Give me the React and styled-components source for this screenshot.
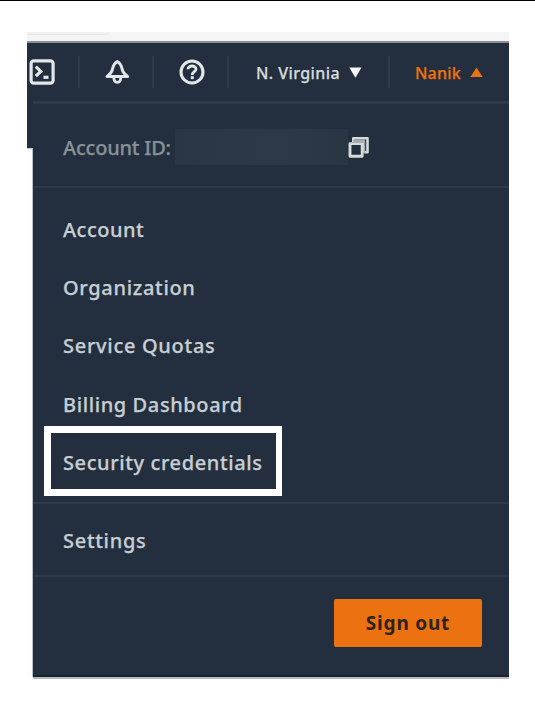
import React from "react";
import styled, { createGlobalStyle } from "styled-components";

const GlobalStyle = createGlobalStyle`
  * { box-sizing: border-box; }
  body { margin: 0; background: #fff; font-family: "Noto Sans", "Open Sans", sans-serif; }
`;

const Page = styled.div`
  width: 535px;
  height: 706px;
  border-top: 1px solid #000;
  padding: 31px 26px 0 27px;
  overflow: hidden;
`;

const Strip = styled.div`
  height: 11px;
  background: #f5f5f5;
  border-bottom: 2px solid #8b9198;
`;

const StripTab = styled.div`
  width: 82px;
  height: 3px;
  background: #f1f1f1;
  border-bottom: 1px solid #e6e6e6;
  border-bottom-right-radius: 3px;
`;

const Shell = styled.div`
  display: grid;
  grid-template-columns: 6px 1fr;
`;

const Gutter = styled.div`
  background: linear-gradient(#232f3e 47px, #b8bcc0 47px, #fdfdfd 49px);
`;

const GutterShade = styled.div`
  height: 529px;
  margin: 47px 0 0 5px;
  background: #b9c0c6;
`;

const Header = styled.header`
  height: 58px;
  background: #232f3e;
  display: flex;
  align-items: center;
`;

const Cell = styled.div`
  width: ${(p) => p.$w}px;
  height: 32px;
  display: flex;
  align-items: center;
  padding-left: ${(p) => p.$pad}px;
  border-right: ${(p) => (p.$last ? "0" : "2px solid #2e3948")};
  color: ${(p) => (p.$active ? "#ec7211" : "#d5dbdb")};
  svg { display: block; flex: none; }
`;

const NavText = styled.span`
  font-size: 16px;
  line-height: 22px;
  font-weight: 500;
  -webkit-text-stroke: 0.25px currentColor;
  letter-spacing: ${(p) => p.$ls}px;
  width: ${(p) => p.$w}px;
  white-space: nowrap;
  margin-top: 2px;
`;

const Menu = styled.div`
  background: #232f3e;
  height: 576px;
  border-bottom: 2px solid #1a2431;
  box-shadow: 0 2px 0 #b5b8bc;
`;

const Divider = styled.div`
  height: ${(p) => p.$h || 2}px;
  background: #2e3a49;
`;

const AccountRow = styled.div`
  height: 82px;
  display: flex;
  align-items: center;
  padding-left: 30px;
`;

const Label = styled.span`
  font-size: 20px;
  line-height: 28px;
  font-weight: 500;
  -webkit-text-stroke: 0.25px currentColor;
  letter-spacing: ${(p) => p.$ls || 0}px;
  color: ${(p) => (p.$dim ? "#879196" : "#c8ced3")};
  white-space: nowrap;
`;

const AccountLabel = styled.div`
  width: 112px;
  margin-top: 5px;
`;

const Redacted = styled.div`
  width: 173px;
  height: 36px;
  margin-top: 4px;
  background: linear-gradient(90deg, #2a3644, #2d3946 60%, #293543);
`;

const CopySlot = styled.div`
  margin-top: 4px;
  svg { display: block; }
`;

const List = styled.div`
  height: 314px;
  padding: 13px 0 10px;
`;

const Item = styled.div`
  position: relative;
  height: ${(p) => p.$h || 58.2}px;
  padding: ${(p) => p.$top || 0}px 0 0 30px;
  display: flex;
  align-items: center;
`;

const Highlight = styled.div`
  position: absolute;
  left: 11px;
  top: -8px;
  width: 238px;
  height: 70px;
  border: solid #fff;
  border-width: 7px 6px 7px 7px;
`;

const Footer = styled.div`
  display: flex;
  justify-content: flex-end;
  padding: 22px 27px 0 0;
`;

const SignOut = styled.button`
  width: 148px;
  height: 48px;
  padding: 0;
  border: 0;
  border-radius: 2px;
  background: #ec7211;
  color: #2d2419;
  font: 700 19px/24px "Noto Sans", sans-serif;
  letter-spacing: 0.8px;
`;

const TerminalIcon = () => (
  <svg width="26" height="26" viewBox="0 0 26 26" fill="none" stroke="#e4e7e9" strokeWidth="3.2">
    <rect x="2.1" y="1.8" width="22" height="22.4" rx="2.6" />
    <path d="M6.8 7.7l5 4.7l-5 4.8" />
    <path d="M14.5 18.3h5" />
  </svg>
);

const BellIcon = () => (
  <svg width="26" height="26" viewBox="0 0 26 26" fill="none" stroke="#e4e7e9" strokeWidth="3" strokeLinejoin="round">
    <path d="M13.3 2.6C9.6 4.2 9 7.5 8.3 10.8C7.6 14 5.8 15.6 3 17.4H23.6C20.8 15.6 19 14 18.3 10.8C17.6 7.5 17 4.2 13.3 2.6Z" />
    <path d="M9.8 18c0 7.2 7 7.2 7 0" strokeWidth="2.8" />
  </svg>
);

const HelpIcon = () => (
  <svg width="26" height="26" viewBox="0 0 26 26" fill="none" stroke="#e4e7e9">
    <circle cx="13" cy="13" r="11" strokeWidth="3.1" />
    <path d="M9 10.2C9 5.9 17.2 6 17 10.2C16.8 12.8 13.3 12.6 13.3 16" strokeWidth="2.8" />
    <path d="M13.3 17.2v2.9" strokeWidth="3" />
  </svg>
);

const CopyIcon = () => (
  <svg width="22" height="23" viewBox="0 0 22 23" fill="none" stroke="#d5dbdb" strokeLinejoin="round">
    <path d="M5.3 6V2.3h14.2v14H16" strokeWidth="2.6" />
    <path d="M5.3 4.8h10.7v12" strokeWidth="2.4" stroke="#a5adb3" />
    <rect x="2" y="7.6" width="12.2" height="12.6" strokeWidth="2.9" fill="#232f3e" />
  </svg>
);

const Caret = ({ up }) => (
  <svg width="13" height="11" viewBox="0 0 13 11">
    <path d={up ? "M6.5 0.5L12.7 10H0.3Z" : "M0.3 0.5H12.5L6.4 10.7Z"} fill={up ? "#ec7211" : "#f4f5f6"} />
  </svg>
);

const links = [
  { label: "Account", ls: 0.5 },
  { label: "Organization", ls: 0.67 },
  { label: "Service Quotas", ls: 0.7 },
  { label: "Billing Dashboard", ls: 0.6 },
  { label: "Security credentials", ls: 0.6, marked: true },
];

export default function App() {
  return (
    <>
      <GlobalStyle />
      <Page>
        <Strip><StripTab /></Strip>
        <Header>
          <Cell $w={53} $pad={2}><TerminalIcon /></Cell>
          <Cell $w={74} $pad={24}><BellIcon /></Cell>
          <Cell $w={75} $pad={25}><HelpIcon /></Cell>
          <Cell $w={161} $pad={27}>
            <NavText $w={93} $ls={0.42}>N. Virginia</NavText>
            <Caret />
          </Cell>
          <Cell $w={119} $pad={25} $active $last>
            <NavText $w={55} $ls={0.2}>Nanik</NavText>
            <Caret up />
          </Cell>
        </Header>
        <Shell>
          <Gutter><GutterShade /></Gutter>
          <Menu>
            <Divider $h={3} />
            <AccountRow>
              <AccountLabel><Label $dim $ls={-0.2}>Account ID:</Label></AccountLabel>
              <Redacted />
              <CopySlot><CopyIcon /></CopySlot>
            </AccountRow>
            <Divider />
            <List>
              {links.map((l) => (
                <Item key={l.label}>
                  <Label $ls={l.ls}>{l.label}</Label>
                  {l.marked && <Highlight />}
                </Item>
              ))}
            </List>
            <Divider />
            <Item $h={71} $top={3}><Label $ls={0.7}>Settings</Label></Item>
            <Divider />
            <Footer><SignOut>Sign out</SignOut></Footer>
          </Menu>
        </Shell>
      </Page>
    </>
  );
}
